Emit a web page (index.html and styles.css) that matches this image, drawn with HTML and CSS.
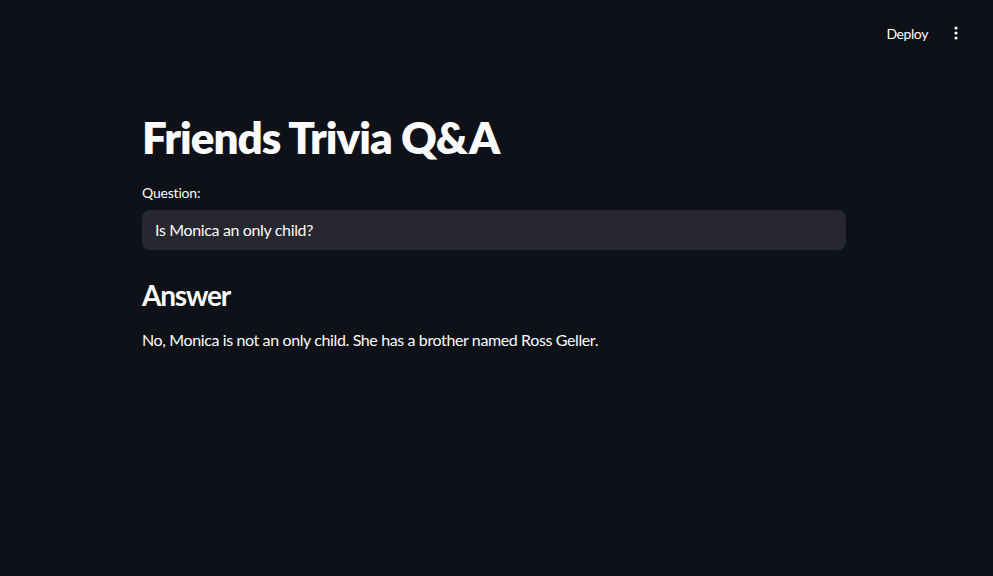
FILE: index.html
```html
<!DOCTYPE html>
<html>
<head>
<meta charset="utf-8">
<link rel="stylesheet" href="styles.css">
</head>
<body>
<div class="app">
  <header class="topbar">
    <button class="deploy">Deploy</button>
    <button class="menu" aria-label="Main menu">
      <svg width="16" height="16" viewBox="0 0 16 16"><circle cx="8" cy="3" r="1.6" fill="#fafafa"/><circle cx="8" cy="8" r="1.6" fill="#fafafa"/><circle cx="8" cy="13" r="1.6" fill="#fafafa"/></svg>
    </button>
  </header>
  <main class="main">
    <h1 class="title">Friends Trivia Q&amp;A</h1>
    <label class="label">Question:</label>
    <div class="input">Is Monica an only child?</div>
    <h3 class="subheader">Answer</h3>
    <p class="answer">No, Monica is not an only child. She has a brother named Ross Geller.</p>
  </main>
</div>
</body>
</html>
```
FILE: styles.css
```css
html, body {
  margin: 0;
  padding: 0;
  background: #0e1117;
  color: #fafafa;
  font-family: "Lato", "Liberation Sans", sans-serif;
}
.app {
  min-height: 576px;
  padding-right: 5px;
}
.topbar {
  height: 60px;
  display: flex;
  justify-content: flex-end;
  align-items: center;
  gap: 10px;
  padding: 6px 20px 0 0;
  box-sizing: border-box;
}
.deploy {
  background: transparent;
  border: none;
  color: #fafafa;
  font-family: inherit;
  font-size: 14px;
  letter-spacing: -0.4px;
  padding: 4px 6px;
}
.menu {
  background: transparent;
  border: none;
  padding: 4px;
  display: flex;
}
.main {
  width: 704px;
  margin: 0 auto;
}
.title {
  font-size: 44px;
  font-weight: 800;
  line-height: 1.2;
  letter-spacing: -1px;
  margin: 51px 0 0;
}
.label {
  display: block;
  font-size: 14px;
  letter-spacing: -0.2px;
  margin-top: 19px;
  line-height: 20px;
}
.input {
  margin-top: 7px;
  height: 40px;
  box-sizing: border-box;
  background: #262730;
  border-radius: 8px;
  padding: 0 13px;
  display: flex;
  align-items: center;
  font-size: 16px;
  letter-spacing: -0.35px;
}
.subheader {
  font-size: 28px;
  font-weight: 700;
  line-height: 1.2;
  letter-spacing: -1.2px;
  margin: 29px 0 0;
}
.answer {
  font-size: 16px;
  margin: 16px 0 0;
  line-height: 24px;
  letter-spacing: -0.38px;
}
```
